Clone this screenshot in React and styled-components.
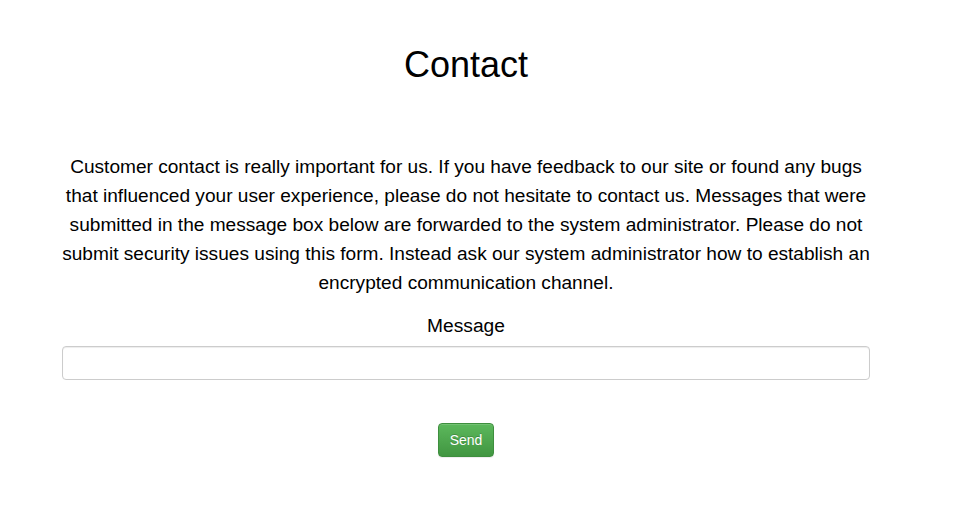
import React from 'react';
import styled, { createGlobalStyle } from 'styled-components';

const GlobalStyle = createGlobalStyle`
  html, body {
    margin: 0;
    padding: 0;
    background: #fff;
  }
  body {
    font-family: "Liberation Sans", Arial, sans-serif;
    color: #000;
  }
`;

const Page = styled.div`
  padding: 45px 0 40px 62px;
`;

const Container = styled.div`
  width: 808px;
  display: flex;
  flex-direction: column;
  align-items: center;
  text-align: center;
`;

const Title = styled.h1`
  margin: 0;
  font-size: 36px;
  font-weight: 400;
  line-height: 1.1;
`;

// slightly wider than the form so the 4th line keeps "an"
const Intro = styled.p`
  margin: 67px -3px 0;
  font-size: 19.1px;
  line-height: 29px;
`;

const Form = styled.form`
  width: 100%;
  display: flex;
  flex-direction: column;
  align-items: center;
  margin-top: 14px;
`;

const Label = styled.label`
  font-size: 19.2px;
  line-height: 29px;
  margin-bottom: 6px;
`;

const Input = styled.input`
  box-sizing: border-box;
  width: 100%;
  height: 34px;
  padding: 6px 12px;
  font-size: 14px;
  font-family: inherit;
  border: 1px solid #ccc;
  border-radius: 4px;
  box-shadow: inset 0 1px 1px rgba(0, 0, 0, 0.075);
  background: #fff;
  outline: none;
`;

const SendButton = styled.button`
  margin-top: 43px;
  height: 34px;
  padding: 6px 11px;
  font-size: 14px;
  line-height: 20px;
  font-family: inherit;
  color: #fff;
  border: 1px solid #3e8f3e;
  border-radius: 4px;
  background-image: linear-gradient(to bottom, #5cb85c 0, #419641 100%);
  text-shadow: 0 -1px 0 rgba(0, 0, 0, 0.2);
  box-shadow: inset 0 1px 0 rgba(255, 255, 255, 0.15), 0 1px 1px rgba(0, 0, 0, 0.075);
  cursor: pointer;
`;

export default function App() {
  return (
    <>
      <GlobalStyle />
      <Page>
        <Container>
          <Title>Contact</Title>
          <Intro>
            Customer contact is really important for us. If you have feedback to our site or found any bugs
            that influenced your user experience, please do not hesitate to contact us. Messages that were
            submitted in the message box below are forwarded to the system administrator. Please do not
            submit security issues using this form. Instead ask our system administrator how to establish an
            encrypted communication channel.
          </Intro>
          <Form onSubmit={(e) => e.preventDefault()}>
            <Label htmlFor="message">Message</Label>
            <Input id="message" type="text" />
            <SendButton type="submit">Send</SendButton>
          </Form>
        </Container>
      </Page>
    </>
  );
}
